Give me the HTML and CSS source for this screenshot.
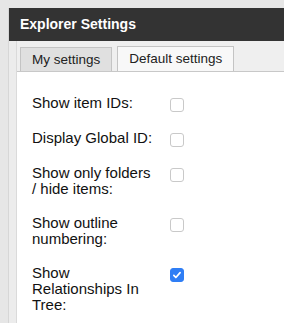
FILE: index.html
```html
<!DOCTYPE html>
<html lang="en">
<head>
  <meta charset="UTF-8" />
  <title>Explorer Settings</title>
  <link rel="stylesheet" href="styles.css">
</head>
<body>

<div class="dialog">
  <header class="dialog-title">Explorer Settings</header>

  <div class="dialog-body">
    <nav class="tabs">
      <span class="tab tab-active">My settings</span>
      <span class="tab">Default settings</span>
    </nav>

    <section class="settings">
      <label class="setting-label" for="ids">Show item IDs:</label>
      <input class="check" type="checkbox" id="ids">

      <label class="setting-label" for="global">Display Global ID:</label>
      <input class="check" type="checkbox" id="global">

      <label class="setting-label" for="folders">Show only folders / hide items:</label>
      <input class="check" type="checkbox" id="folders">

      <label class="setting-label" for="outline">Show outline numbering:</label>
      <input class="check" type="checkbox" id="outline">

      <label class="setting-label" for="rels">Show Relationships In Tree:</label>
      <input class="check" type="checkbox" id="rels" checked>
    </section>
  </div>
</div>

</body>
</html>
```

FILE: styles.css
```css
* { box-sizing: border-box; }
html, body { height: 100%; }
body {
  font-family: 'Liberation Sans', Arial, sans-serif;
  margin: 0;
  padding: 8px 0 0 8px;
  background: #e6e6e6;
  color: #222;
  overflow: hidden;
}
.dialog {
  display: flex;
  flex-direction: column;
  background: #ececec;
  border-left: 1px solid #d6d6d6;
  height: 100%;
}
.dialog-title {
  background: #333;
  color: #fff;
  font-weight: bold;
  font-size: 14px;
  height: 33px;
  line-height: 33px;
  padding-left: 11px;
}
.dialog-body {
  flex: 1;
  margin-left: 7px;
  border-left: 1px solid #dadada;
  background: #fff;
}
.tabs {
  display: flex;
  gap: 5px;
  align-items: flex-end;
  background: #efefef;
  height: 31px;
  padding-left: 3px;
  border-bottom: 1px solid #c8c8c8;
}
.tab {
  font-size: 13.5px;
  height: 25px;
  line-height: 24px;
  padding: 0 11px;
  border: 1px solid #c4c4c4;
  border-bottom: none;
  background: #f8f8f8;
  color: #222;
}
.tab-active {
  background: #e0e0e0;
  height: 24px;
  line-height: 23px;
}
.settings {
  display: grid;
  grid-template-columns: 122px auto;
  column-gap: 16px;
  row-gap: 18px;
  align-items: start;
  padding: 23px 0 0 15px;
}
.setting-label {
  font-size: 15px;
  line-height: 16px;
  color: #111;
}
.check {
  appearance: none;
  -webkit-appearance: none;
  margin: 3px 0 0;
  width: 14px;
  height: 14px;
  border: 1px solid #c9c9c9;
  border-radius: 3px;
  background: #fff;
}
.check:checked {
  background: #2f7ef5;
  border-color: #2f7ef5;
  background-image: url("data:image/svg+xml,%3Csvg xmlns='http://www.w3.org/2000/svg' viewBox='0 0 14 14'%3E%3Cpath d='M3.3 7.4l2.4 2.5 4.9-5.6' fill='none' stroke='white' stroke-width='2' stroke-linecap='round' stroke-linejoin='round'/%3E%3C/svg%3E");
  background-size: 100% 100%;
}
```
